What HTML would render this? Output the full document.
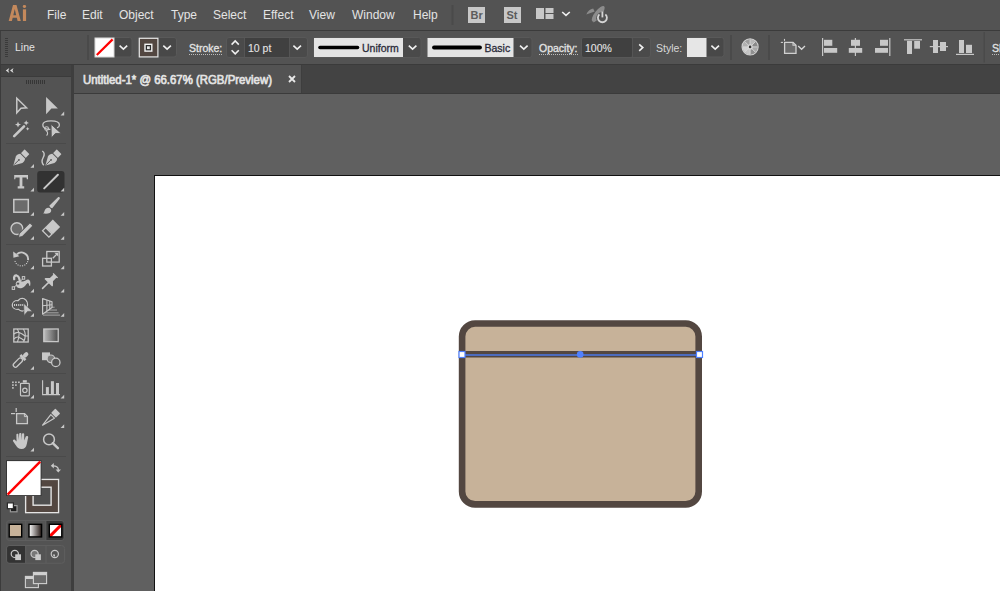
<!DOCTYPE html>
<html><head><meta charset="utf-8">
<style>
*{margin:0;padding:0;box-sizing:border-box}
html,body{width:1000px;height:591px;overflow:hidden;background:#535353;font-family:"Liberation Sans",sans-serif;position:relative}
.a{position:absolute}
.t{position:absolute;white-space:nowrap;color:#e4e4e4;font-size:12px;line-height:14px}
.mi{font-size:12px}
.cl{font-size:10.5px;line-height:12px;-webkit-text-stroke:0.3px currentColor}
.dot{border-bottom:1px dotted #bbb}
#menubar{left:0;top:0;width:1000px;height:30px;background:#535353}
#menuline{left:0;top:30px;width:1000px;height:1px;background:#3b3b3b}
#ctrl{left:0;top:31px;width:1000px;height:33px;background:#535353;border-left:1px solid #3e3e3e}
#ctrlline{left:0;top:64px;width:1000px;height:1px;background:#3b3b3b}
#tools{left:1px;top:65px;width:70px;height:526px;background:#535353}
#toolshead{left:1px;top:65px;width:70px;height:11px;background:#434343}
#toolsheadline{left:1px;top:76px;width:70px;height:1px;background:#3b3b3b}
#leftedge{left:0;top:65px;width:1px;height:526px;background:#3b3b3b}
#gap{left:71px;top:65px;width:3px;height:526px;background:#3e3e3e}
#tabstrip{left:74px;top:65px;width:926px;height:28px;background:#434343}
#tab{left:74px;top:65px;width:228px;height:28px;background:#535353;border-right:1px solid #3e3e3e}
#tabline{left:74px;top:93px;width:926px;height:1px;background:#3b3b3b}
#canvas{left:74px;top:94px;width:926px;height:497px;background:#606060}
#artboard{left:154px;top:175px;width:900px;height:500px;background:#fff;border-left:1px solid #111;border-top:1px solid #111}
</style></head>
<body>
<div class="a" id="menubar"></div>
<div class="a" id="menuline"></div>
<div class="a" id="ctrl"></div>
<div class="a" id="ctrlline"></div>
<div class="a" id="leftedge"></div>
<div class="a" id="tools"></div>
<div class="a" id="toolshead"></div>
<div class="a" id="toolsheadline"></div>
<div class="a" id="gap"></div>
<div class="a" id="tabstrip"></div>
<div class="a" id="tab"></div>
<div class="a" id="tabline"></div>
<div class="a" id="canvas"></div>
<div class="a" id="artboard"></div>


<!-- menu -->
<div class="t mi" style="left:47px;top:8px">File</div>
<div class="t mi" style="left:82px;top:8px">Edit</div>
<div class="t mi" style="left:119px;top:8px">Object</div>
<div class="t mi" style="left:171px;top:8px">Type</div>
<div class="t mi" style="left:213px;top:8px">Select</div>
<div class="t mi" style="left:263px;top:8px">Effect</div>
<div class="t mi" style="left:309px;top:8px">View</div>
<div class="t mi" style="left:352px;top:8px">Window</div>
<div class="t mi" style="left:413px;top:8px">Help</div>


<!-- control bar -->
<svg class="a" style="left:0;top:0" width="1000" height="66" viewBox="0 0 1000 66">
  <!-- gripper -->
  <g fill="#3a3a3a">
    <rect x="5" y="38" width="3" height="1"/><rect x="5" y="40" width="3" height="1"/><rect x="5" y="42" width="3" height="1"/>
    <rect x="5" y="44" width="3" height="1"/><rect x="5" y="46" width="3" height="1"/><rect x="5" y="48" width="3" height="1"/>
    <rect x="5" y="50" width="3" height="1"/><rect x="5" y="52" width="3" height="1"/><rect x="5" y="54" width="3" height="1"/>
    <rect x="5" y="56" width="3" height="1"/>
  </g>
  <!-- separators -->
  <g fill="#4a4a4a">
    <rect x="87" y="35" width="2" height="25"/>
    <rect x="730" y="35" width="2" height="25"/>
    <rect x="768" y="35" width="2" height="25"/>
    <rect x="983.5" y="32" width="1.5" height="30.5"/>
  </g>
  <!-- fill swatch -->
  <rect x="94.5" y="37.5" width="37.5" height="19.5" rx="2.5" fill="#484848" stroke="#595959" stroke-width="1"/>
  <rect x="95" y="38" width="19" height="19" fill="#fff" stroke="#d8d8d8" stroke-width="1"/>
  <line x1="96.8" y1="55" x2="112.6" y2="39.4" stroke="#f00" stroke-width="2.2"/>
  <polyline points="119.6,45.6 123.4,49.2 127.2,45.6" fill="none" stroke="#f0f0f0" stroke-width="1.6"/>
  <!-- stroke swatch -->
  <rect x="138.5" y="37.5" width="38" height="19.5" rx="2.5" fill="#484848" stroke="#595959" stroke-width="1"/>
  <rect x="139.3" y="38.3" width="18.6" height="18.6" fill="#534741" stroke="#e6e6e6" stroke-width="1.2"/>
  <rect x="145" y="44.3" width="6.8" height="6.8" fill="#2e2e2e" stroke="#f4f4f4" stroke-width="1.4"/>
  <rect x="147" y="46.3" width="2.8" height="2.8" fill="#e8e8e8"/>
  <polyline points="163.3,45.6 167.1,49.2 170.9,45.6" fill="none" stroke="#f0f0f0" stroke-width="1.6"/>
  <!-- stroke stepper -->
  <rect x="226.5" y="37.5" width="81" height="20" rx="2.5" fill="#4a4a4a" stroke="#585858" stroke-width="1"/>
  <rect x="244.5" y="38" width="44.5" height="19" fill="#404040"/>
  <rect x="244" y="38" width="1" height="19" fill="#555"/>
  <rect x="289" y="38" width="1" height="19" fill="#555"/>
  <polyline points="231.6,44.6 235.2,41 238.8,44.6" fill="none" stroke="#f0f0f0" stroke-width="1.6"/>
  <polyline points="231.6,50.2 235.2,53.8 238.8,50.2" fill="none" stroke="#f0f0f0" stroke-width="1.6"/>
  <polyline points="293.4,45.6 297.2,49.2 301,45.6" fill="none" stroke="#f0f0f0" stroke-width="1.6"/>
  <!-- uniform -->
  <rect x="313.5" y="37.5" width="107.5" height="20" rx="2.5" fill="#4a4a4a" stroke="#585858" stroke-width="1"/>
  <rect x="314" y="38" width="89" height="19" fill="#e4e4e4"/>
  <line x1="320" y1="47.5" x2="357.5" y2="47.5" stroke="#000" stroke-width="3.6" stroke-linecap="round"/>
  <polyline points="408.8,45.6 412.6,49.2 416.4,45.6" fill="none" stroke="#f0f0f0" stroke-width="1.6"/>
  <!-- basic -->
  <rect x="427" y="37.5" width="105" height="20" rx="2.5" fill="#4a4a4a" stroke="#585858" stroke-width="1"/>
  <rect x="427.5" y="38" width="86" height="19" fill="#e4e4e4"/>
  <line x1="434" y1="47.5" x2="480" y2="47.5" stroke="#000" stroke-width="3.8" stroke-linecap="round"/>
  <polyline points="520,45.6 523.8,49.2 527.6,45.6" fill="none" stroke="#f0f0f0" stroke-width="1.6"/>
  <!-- opacity -->
  <rect x="581.5" y="37.5" width="69" height="20" rx="2.5" fill="#4a4a4a" stroke="#585858" stroke-width="1"/>
  <rect x="582" y="38" width="50" height="19" rx="2" fill="#404040"/>
  <rect x="632" y="38" width="1" height="19" fill="#555"/>
  <polyline points="639.2,44.4 642.8,47.6 639.2,50.8" fill="none" stroke="#f0f0f0" stroke-width="1.6"/>
  <!-- style -->
  <rect x="686.5" y="37.5" width="37.5" height="19.5" rx="2.5" fill="#484848" stroke="#595959" stroke-width="1"/>
  <rect x="687" y="38" width="19.5" height="19" fill="#e6e6e6"/>
  <polyline points="711.4,45.6 715.2,49.2 719,45.6" fill="none" stroke="#f0f0f0" stroke-width="1.6"/>
</svg>
<div class="t cl" style="left:15px;top:41px;-webkit-text-stroke:0">Line</div>
<div class="t cl dot" style="left:189px;top:42px">Stroke:</div>
<div class="t cl" style="left:248px;top:42px;-webkit-text-stroke:0.1px">10 pt</div>
<div class="t cl" style="left:362px;top:42px;color:#2b2b3a">Uniform</div>
<div class="t cl" style="left:484.5px;top:42px;color:#2b2b3a">Basic</div>
<div class="t cl dot" style="left:539px;top:42px">Opacity:</div>
<div class="t cl" style="left:585px;top:42px;-webkit-text-stroke:0.1px">100%</div>
<div class="t cl" style="left:656px;top:42px;-webkit-text-stroke:0;color:#d8d8d8">Style:</div>
<div class="t cl dot" style="left:992px;top:42px">Sh</div>



<!-- menu & control icons -->
<svg class="a" style="left:0;top:0" width="1000" height="66" viewBox="0 0 1000 66">
  <!-- Ai logo -->
  <path d="M8.7,21 L13,5 L16.5,5 L20.8,21 L17.6,21 L16.8,17.8 L12.7,17.8 L11.9,21 Z M13.3,15.2 L16.2,15.2 L14.75,8.9 Z" fill="#c4895c" fill-rule="evenodd"/>
  <rect x="22.8" y="5" width="3.3" height="3" rx="1.4" fill="#c4895c"/>
  <rect x="22.9" y="9.3" width="3.2" height="11.7" fill="#c4895c"/>
  <!-- menu separator -->
  <rect x="451.5" y="5" width="2" height="20" fill="#4a4a4a"/>
  <!-- Br St -->
  <rect x="468" y="7" width="17" height="16" fill="#c8c8c8"/>
  <rect x="504" y="7" width="17" height="16" fill="#c8c8c8"/>
  <!-- layout -->
  <rect x="536" y="8" width="8" height="11" fill="#c8c8c8"/>
  <rect x="545.5" y="8" width="8" height="5" fill="#c8c8c8"/>
  <rect x="545.5" y="14" width="8" height="5" fill="#c8c8c8"/>
  <polyline points="562.2,12 566,15.4 569.8,12" fill="none" stroke="#eee" stroke-width="1.6"/>
  <!-- rocket -->
  <ellipse cx="598.2" cy="13.8" rx="3.4" ry="9.6" transform="rotate(38 598.2 13.8)" fill="#8c8c8c"/>
  <path d="M586.3,14.6 C587.5,11.5 590,9.2 593.2,8.6 L594.6,11.6 Z" fill="#8c8c8c"/>
  <path d="M593.2,22.6 C593.4,20.4 594.6,18.6 596.4,17.4 L598.6,19.4 Z" fill="#8c8c8c"/>
  <circle cx="602.4" cy="18.2" r="6.2" fill="#535353"/>
  <path d="M599.4,14.4 A4.5,4.5 0 1 0 605.4,14.4" fill="none" stroke="#d4d4d4" stroke-width="1.8"/>
  <line x1="602.4" y1="11.6" x2="602.4" y2="17.4" stroke="#d4d4d4" stroke-width="1.8"/>
  <!-- recolor wheel -->
  <g transform="translate(750.1,46.9)">
    <circle r="8" fill="#9a9a9a" stroke="#cfcfcf" stroke-width="1.2"/>
    <path d="M0,0 L0,-7.5 A7.5,7.5 0 0 1 5.3,-5.3 Z" fill="#b8b8b8"/>
    <path d="M0,0 L5.3,-5.3 A7.5,7.5 0 0 1 7.5,0 Z" fill="#8a8a8a"/>
    <path d="M0,0 L7.5,0 A7.5,7.5 0 0 1 5.3,5.3 Z" fill="#a8a8a8"/>
    <path d="M0,0 L5.3,5.3 A7.5,7.5 0 0 1 0,7.5 Z" fill="#909090"/>
    <path d="M0,0 L0,7.5 A7.5,7.5 0 0 1 -5.3,5.3 Z" fill="#c4c4c4"/>
    <path d="M0,0 L-5.3,5.3 A7.5,7.5 0 0 1 -7.5,0 Z" fill="#d0d0d0"/>
    <path d="M0,0 L-7.5,0 A7.5,7.5 0 0 1 -5.3,-5.3 Z" fill="#b0b0b0"/>
    <path d="M0,0 L-5.3,-5.3 A7.5,7.5 0 0 1 0,-7.5 Z" fill="#9c9c9c"/>
    <g stroke="#d8d8d8" stroke-width="0.9">
      <line x1="0" y1="-7.5" x2="0" y2="7.5"/><line x1="-7.5" y1="0" x2="7.5" y2="0"/>
      <line x1="-5.3" y1="-5.3" x2="5.3" y2="5.3"/><line x1="-5.3" y1="5.3" x2="5.3" y2="-5.3"/>
    </g>
    <circle r="2.6" fill="#d8d8d8"/>
    <circle r="1.3" fill="#333"/>
  </g>
  <!-- doc icon -->
  <path d="M784.6,42.3 L793,42.3 L796,45.3 L796,53.4 L784.6,53.4 Z" fill="#6b6b6b" stroke="#d0d0d0" stroke-width="1.3"/>
  <path d="M793,42.3 L793,45.3 L796,45.3" fill="none" stroke="#d0d0d0" stroke-width="1.1"/>
  <line x1="780.8" y1="42.4" x2="783" y2="42.4" stroke="#d0d0d0" stroke-width="1.1"/>
  <line x1="784.5" y1="38.9" x2="784.5" y2="40.9" stroke="#d0d0d0" stroke-width="1.1"/>
  <polyline points="798.2,46 801.6,49.3 805,46" fill="none" stroke="#d8d8d8" stroke-width="1.3"/>
  <!-- align -->
  <g fill="#c8c8c8">
    <rect x="822" y="38" width="1.2" height="18"/>
    <rect x="824" y="39.8" width="8.3" height="6"/>
    <rect x="824" y="48" width="13.2" height="4.8"/>
    <rect x="854.8" y="38" width="1.2" height="18"/>
    <rect x="851" y="39.8" width="9" height="6"/>
    <rect x="848.8" y="48" width="13.4" height="4.8"/>
    <rect x="889.2" y="38" width="1.2" height="18"/>
    <rect x="880" y="39.8" width="8" height="6"/>
    <rect x="875" y="48" width="13" height="4.8"/>
    <rect x="904" y="39.2" width="18" height="1.2"/>
    <rect x="907" y="40.8" width="5" height="13.2"/>
    <rect x="914.2" y="41" width="5.8" height="7.7"/>
    <rect x="929.8" y="46" width="18.2" height="1.2"/>
    <rect x="933" y="40" width="5" height="13"/>
    <rect x="940" y="42" width="6" height="9"/>
    <rect x="956" y="53.8" width="18" height="1.2"/>
    <rect x="959" y="40" width="5" height="13"/>
    <rect x="966" y="44.8" width="6" height="8.2"/>
  </g>
</svg>
<div class="t" style="left:470.5px;top:8px;font-size:11px;font-weight:bold;color:#5c5c5c">Br</div>
<div class="t" style="left:506.5px;top:8px;font-size:11px;font-weight:bold;color:#5c5c5c">St</div>


<!-- tab -->
<div class="t" id="m_tab" style="left:83px;top:73px;font-size:12px;color:#e4e4e4;-webkit-text-stroke:0.65px #e4e4e4;transform:scaleX(.95);transform-origin:0 0">Untitled-1* @ 66.67% (RGB/Preview)</div>
<svg class="a" style="left:0;top:60px" width="320" height="40" viewBox="0 60 320 40">
  <path d="M289,76 L295,82 M295,76 L289,82" stroke="#e8e8e8" stroke-width="1.8"/>
</svg>

<!-- tools panel -->
<svg class="a" style="left:0;top:60px" width="74" height="531" viewBox="0 60 74 531">
  <!-- header << -->
  <path d="M9.3,68.1 L5.8,70.5 L9.3,72.9 L8.3,70.5 Z M13.5,68.1 L10,70.5 L13.5,72.9 L12.5,70.5 Z" fill="#dcdcdc"/>
  <!-- gripper -->
  <g fill="#363636">
    <rect x="26" y="80" width="1" height="4"/><rect x="28" y="80" width="1" height="4"/><rect x="30" y="80" width="1" height="4"/>
    <rect x="32" y="80" width="1" height="4"/><rect x="34" y="80" width="1" height="4"/><rect x="36" y="80" width="1" height="4"/>
    <rect x="38" y="80" width="1" height="4"/><rect x="40" y="80" width="1" height="4"/><rect x="42" y="80" width="1" height="4"/>
    <rect x="44" y="80" width="1" height="4"/>
  </g>
  <!-- separators -->
  <g fill="#4a4a4a">
    <rect x="6" y="143" width="60" height="1"/>
    <rect x="6" y="244" width="60" height="1"/>
    <rect x="6" y="321" width="60" height="1"/>
    <rect x="6" y="373" width="60" height="1"/>
    <rect x="6" y="402" width="60" height="1"/>
    <rect x="6" y="456" width="60" height="1"/>
  </g>
  <!-- selected line tool bg -->
  <rect x="37.2" y="171" width="27.3" height="21.4" rx="3" fill="#323232"/>
  <!-- flyout triangles -->
  <g fill="#c8c8c8">
    <path d="M60.6,115.4 L64.2,115.4 L64.2,111.4 Z"/>
    <path d="M30.4,167.8 L34,167.8 L34,164 Z"/>
    <path d="M30.4,191.6 L34,191.6 L34,187.8 Z"/>
    <path d="M60.6,191.6 L64.2,191.6 L64.2,187.8 Z"/>
    <path d="M30.4,215.8 L34,215.8 L34,212 Z"/>
    <path d="M60.6,215.8 L64.2,215.8 L64.2,212 Z"/>
    <path d="M30.4,239.8 L34,239.8 L34,236 Z"/>
    <path d="M60.6,239.8 L64.2,239.8 L64.2,236 Z"/>
    <path d="M30.4,269.2 L34,269.2 L34,265.4 Z"/>
    <path d="M60.6,269.2 L64.2,269.2 L64.2,265.4 Z"/>
    <path d="M30.4,292.6 L34,292.6 L34,288.8 Z"/>
    <path d="M60.6,292.6 L64.2,292.6 L64.2,288.8 Z"/>
    <path d="M30.4,316.8 L34,316.8 L34,313 Z"/>
    <path d="M60.6,316.8 L64.2,316.8 L64.2,313 Z"/>
    <path d="M30.4,369.8 L34,369.8 L34,366 Z"/>
    <path d="M30.4,398.6 L34,398.6 L34,394.8 Z"/>
    <path d="M60.6,398.6 L64.2,398.6 L64.2,394.8 Z"/>
    <path d="M60.6,428 L64.2,428 L64.2,424.2 Z"/>
    <path d="M30.4,451.6 L34,451.6 L34,447.8 Z"/>
  </g>
  <g fill="#c8c8c8" stroke="#c8c8c8">
  <!-- row1 selection (outline) -->
  <path d="M16.8,98.2 L26.6,107.8 L21,108.2 L16.8,112.8 Z" fill="none" stroke-width="1.5" stroke-linejoin="miter"/>
  <!-- direct selection (filled) -->
  <path d="M46.1,96.9 L57.9,108.5 L51.4,108.5 L46.1,114.2 Z" stroke="none"/>
  <!-- row2 magic wand -->
  <line x1="14.2" y1="136.2" x2="24" y2="126.4" stroke-width="2.6" stroke-linecap="round"/>
  <path d="M18,121.6 L18.9,123.7 L21,124.6 L18.9,125.5 L18,127.6 L17.1,125.5 L15,124.6 L17.1,123.7 Z" stroke="none"/>
  <path d="M26.2,120.2 L27,122.1 L28.9,122.9 L27,123.7 L26.2,125.6 L25.4,123.7 L23.5,122.9 L25.4,122.1 Z" stroke="none"/>
  <path d="M27.6,127 L28.2,128.2 L29.4,128.8 L28.2,129.4 L27.6,130.6 L27,129.4 L25.8,128.8 L27,128.2 Z" stroke="none"/>
  <!-- lasso -->
  <path d="M50.5,129.4 C45.5,129.6 42.6,127.6 42.8,124.8 C43,122 47,120.9 51,120.9 C55.5,120.9 59.4,122.2 59.4,124.9 C59.4,126.3 58.6,127.3 57,127.9" fill="none" stroke-width="1.3"/>
  <circle cx="46.6" cy="128.6" r="1.9" fill="none" stroke-width="1.1"/>
  <path d="M46.2,130.6 C47.8,132 48.2,133.8 46.6,135.6" fill="none" stroke-width="1.1"/>
  <path d="M51,124.2 L61.2,133.4 L55.4,133.5 L51.3,138 Z" stroke="#535353" stroke-width="0.9"/>
  <!-- row3 pen -->
  <g transform="translate(13.3,165.5) rotate(45)">
    <path d="M0,0 L-4.6,-8.2 C-5.2,-10 -4.6,-12 -3.4,-13.2 L3.4,-13.2 C4.6,-12 5.2,-10 4.6,-8.2 Z" stroke="none"/>
    <rect x="-3.4" y="-19.4" width="6.8" height="5.2" rx="0.6" stroke="none"/>
    <line x1="0" y1="-1.2" x2="0" y2="-7.5" stroke="#535353" stroke-width="0.9"/><circle cx="0" cy="-8" r="0.9" fill="#535353" stroke="none"/>
  </g>
  <!-- curvature pen -->
  <g transform="translate(45.4,165.5) rotate(45)">
    <path d="M0,0 L-4.6,-8.2 C-5.2,-10 -4.6,-12 -3.4,-13.2 L3.4,-13.2 C4.6,-12 5.2,-10 4.6,-8.2 Z" stroke="none"/>
    <rect x="-3.4" y="-19.4" width="6.8" height="5.2" rx="0.6" stroke="none"/>
    <line x1="0" y1="-1.2" x2="0" y2="-7.5" stroke="#535353" stroke-width="0.9"/><circle cx="0" cy="-8" r="0.9" fill="#535353" stroke="none"/>
  </g>
  <path d="M42.3,151 C44.6,152.6 44.6,155 43.2,157.5 C41.8,160 41.6,163 43.8,165.2" fill="none" stroke-width="1.4"/>
  <!-- row4 type T -->
  <path d="M14.2,179.2 L14.2,175 L28,175 L28,179.2 L26.8,179.2 L26.6,177.5 L22.4,177.5 L22.4,186.2 L24.2,186.2 L24.2,188.6 L17.7,188.6 L17.7,186.2 L19.6,186.2 L19.6,177.5 L15.5,177.5 L15.3,179.2 Z" stroke="none"/>
  <!-- line -->
  <line x1="44.2" y1="188.4" x2="57.9" y2="174.7" stroke-width="2" stroke-linecap="round"/>
  <!-- row5 rectangle -->
  <rect x="13.8" y="199.5" width="14.5" height="12.7" fill="#6b6b6b" stroke-width="1.5"/>
  <!-- paintbrush -->
  <path d="M-2,6.2 L-1.2,-5.6 C-1.1,-7.4 1.1,-7.4 1.2,-5.6 L2,6.2 C1,6.8 -1,6.8 -2,6.2 Z" transform="translate(54.9,202.4) rotate(42)" stroke="none"/>
  <path d="M43.2,213.6 C44.6,212.4 44.2,210.2 45.8,208.8 C47.3,207.5 49.6,207.6 50.7,208.9 C51.7,210.2 51.2,212.2 49.6,213 C47.8,213.9 45.5,213.6 43.2,213.6 Z" stroke="none"/>
  <!-- row6 shaper -->
  <circle cx="16.9" cy="228.6" r="5.9" fill="#6b6b6b" stroke-width="1.4"/>
  <g transform="translate(18.4,237.4) rotate(45)">
    <path d="M0,0 L-2.2,-3.4 L-2.2,-18 C-2.2,-19 2.2,-19 2.2,-18 L2.2,-3.4 Z" stroke="#535353" stroke-width="1"/>
  </g>
  <!-- eraser -->
  <g transform="translate(51.1,228.6) rotate(-45)">
    <rect x="-2.8" y="-5.2" width="10.4" height="10.4" stroke="none"/>
    <rect x="-7.6" y="-4.5" width="4.4" height="9" fill="none" stroke-width="1.3"/>
  </g>
  <!-- row7 rotate -->
  <path d="M16.92,254.22 A6.7,6.7 0 0 1 28.03,260.13" fill="none" stroke-width="1.9"/>
  <path d="M13.2,251.4 L13.4,257.8 L19.4,256.2 Z" stroke="none"/>
  <g stroke="none"><rect x="14.55" y="260.94" width="1.1" height="1.1"/><rect x="15.72" y="262.96" width="1.1" height="1.1"/><rect x="17.50" y="264.45" width="1.1" height="1.1"/><rect x="19.69" y="265.25" width="1.1" height="1.1"/><rect x="22.01" y="265.25" width="1.1" height="1.1"/><rect x="24.20" y="264.45" width="1.1" height="1.1"/><rect x="25.98" y="262.96" width="1.1" height="1.1"/><rect x="27.06" y="261.16" width="1.1" height="1.1"/></g>
  <!-- scale -->
  <rect x="46.8" y="251.5" width="12.4" height="10.6" fill="none" stroke-width="1.3"/>
  <rect x="42.6" y="258.3" width="8.8" height="7.7" fill="none" stroke-width="1.3"/>
  <line x1="52.8" y1="258.2" x2="57.4" y2="253.6" stroke-width="1.3"/>
  <path d="M54.4,252.8 L58.2,252.8 L58.2,256.6 Z" stroke="none"/>
  <!-- row8 puppet warp -->
  <path d="M14.2,279.2 C13.6,276.6 15,275.2 16.6,275.5 C18.4,275.9 19.4,278.2 19.8,281" fill="none" stroke-width="2.3" stroke-linecap="round"/>
  <path d="M17,281.2 C19,280.4 21,281.8 23,281.6 C25,281.3 26.6,279.3 28.3,279.6 C30.2,280 30.8,282.6 30.2,285.8 L29.2,285.8 C29,284 28.4,282.8 27.4,283.2 C25.8,284.2 25,287 22,287.9 C19.5,288.5 17.4,288 16.3,286.2 C15.5,284.8 15.8,282.2 17,281.2 Z" stroke="none"/>
  <line x1="13.6" y1="287.6" x2="16.6" y2="285" stroke-width="1"/>
  <line x1="19.6" y1="282" x2="23" y2="278.6" stroke-width="1"/>
  <circle cx="18" cy="283.6" r="1.7" fill="#535353" stroke-width="1"/>
  <rect x="12.2" y="286.8" width="2.4" height="2.6" fill="#535353" stroke-width="1"/>
  <rect x="22.3" y="276.6" width="2.4" height="2.6" fill="#535353" stroke-width="1"/>
  <!-- pin -->
  <g transform="translate(50,281) rotate(45)">
    <path d="M-3.2,-8.2 L3.2,-8.2 L3.2,-7 L2.2,-6.8 L2.2,-2 L5.4,1.2 L5.4,2.4 L-5.4,2.4 L-5.4,1.2 L-2.2,-2 L-2.2,-6.8 L-3.2,-7 Z" stroke="none"/>
    <line x1="0" y1="2.4" x2="0" y2="10.5" stroke-width="1.6" stroke-linecap="round"/>
  </g>
  <!-- row9 shape builder -->
  <ellipse cx="17.3" cy="305" rx="5" ry="4.4" fill="none" stroke-width="1.3"/>
  <ellipse cx="22.2" cy="304.7" rx="5.3" ry="6.3" fill="none" stroke-width="1.3"/>
  <ellipse cx="17.3" cy="305" rx="4.35" ry="3.75" fill="#535353" stroke="none"/>
  <ellipse cx="22.2" cy="304.7" rx="4.65" ry="5.65" fill="#535353" stroke="none"/>
  <g stroke="none"><rect x="14" y="304" width="1.1" height="2"/><rect x="16" y="304" width="1.1" height="2"/><rect x="18.2" y="304" width="1.1" height="2"/><rect x="20.2" y="304" width="1.1" height="2"/><rect x="22.2" y="304" width="1.1" height="2"/></g>
  <path d="M23.6,303.2 L32.4,311.4 L27.6,311.4 L24.1,315.4 Z" stroke="#535353" stroke-width="0.6"/>
  <!-- perspective grid -->
  <g stroke="none" fill="#8c8c8c">
    <rect x="50" y="306.6" width="4.6" height="1.4"/><rect x="47.5" y="309.3" width="9.5" height="1.5"/>
    <rect x="45" y="312" width="13.6" height="1.5"/><rect x="43" y="314.4" width="17" height="1.5"/>
  </g>
  <path d="M42.6,298.6 L52,301.8 L52,307.6 L42.6,314.2 Z" fill="#535353" stroke-width="1.2" stroke-linejoin="round"/>
  <line x1="46.9" y1="300" x2="46.9" y2="311.2" stroke-width="1.1"/>
  <line x1="49.8" y1="301" x2="49.8" y2="309.2" stroke-width="1.1"/>
  <line x1="42.6" y1="305.8" x2="52" y2="304.8" stroke-width="1.1"/>
  <!-- row10 mesh -->
  <rect x="13.8" y="329" width="14.4" height="13" fill="none" stroke-width="1.3"/>
  <path d="M17.2,329 C19.8,332 19.8,336 17.4,342 M23.4,329 C26,333 26,337 23.6,342 M13.8,334 C15.5,332.6 17.5,332 19.2,332.6 M13.8,339 C15.5,337.4 17.3,336.8 18.8,337.2 M19.2,332.6 C21.5,333.5 23.5,334.8 25.3,336.2 M18.8,337.2 C21,338 23,339.5 24.6,341 M25.4,336 L28.2,336" fill="none" stroke-width="1.1"/>
  <!-- gradient -->
  <defs><linearGradient id="gr1" x1="0" x2="1" y1="0" y2="0"><stop offset="0" stop-color="#bdbdbd"/><stop offset="1" stop-color="#4a4a4a"/></linearGradient></defs>
  <rect x="43.8" y="329" width="14.4" height="12.6" fill="url(#gr1)" stroke="#c8c8c8" stroke-width="1.3"/>
  <!-- row11 eyedropper -->
  <g transform="translate(20.3,360.2) rotate(45)">
    <rect x="-2.2" y="-2.2" width="4.4" height="11.2" rx="2.2" fill="none" stroke-width="1.3"/>
    <rect x="-3.6" y="-5" width="7.2" height="2.6" stroke="none"/>
    <rect x="-2" y="-10.6" width="4" height="6" rx="2" stroke="none"/>
  </g>
  <!-- blend -->
  <rect x="42" y="352.4" width="8" height="7.8" stroke="none"/>
  <circle cx="50.9" cy="358.8" r="3.8" fill="#7a7a7a" stroke-width="1.2"/>
  <circle cx="55.8" cy="362.4" r="4.2" fill="#535353" stroke-width="1.3"/>
  <!-- row12 symbol sprayer -->
  <g stroke="none">
    <rect x="12.1" y="381.5" width="1.6" height="1.6"/><rect x="15.1" y="381.5" width="1.6" height="1.6"/><rect x="18.1" y="381.5" width="1.6" height="1.6"/>
    <rect x="12.1" y="384.3" width="1.6" height="1.6"/><rect x="15.1" y="384.3" width="1.6" height="1.6"/>
    <rect x="12.1" y="387.1" width="1.6" height="1.6"/>
    <rect x="22.8" y="380.2" width="4" height="2.4"/>
  </g>
  <rect x="20.5" y="383.4" width="8.8" height="12.4" rx="0.8" fill="none" stroke-width="1.2"/>
  <circle cx="24.9" cy="390.3" r="2.2" fill="none" stroke-width="1.2"/>
  <!-- column graph -->
  <path d="M42.6,380.2 L42.6,394.6 L60,394.6" fill="none" stroke-width="1.1"/>
  <g stroke="none"><rect x="45.9" y="387.1" width="3" height="7"/><rect x="50.9" y="381.2" width="3" height="12.9"/><rect x="56" y="383" width="3" height="11.1"/></g>
  <!-- row13 artboard -->
  <path d="M16.6,413.6 L24.6,413.6 L27.4,416.4 L27.4,423.6 L16.6,423.6 Z" fill="#6b6b6b" stroke-width="1.3"/>
  <path d="M24.4,413.6 L24.4,416.6 L27.4,416.6" fill="none" stroke-width="1"/>
  <line x1="11" y1="413.6" x2="15.2" y2="413.6" stroke-width="1.2"/>
  <line x1="16.2" y1="408" x2="16.2" y2="412" stroke-width="1.2"/>
  <!-- slice -->
  <path d="M42.6,425.2 L50.8,414.6 L54.4,418.2 Z" fill="none" stroke-width="1.2" stroke-linejoin="round"/>
  <g transform="translate(55.2,413.6) rotate(45)"><rect x="-3.4" y="-3.6" width="6.8" height="6" rx="0.6" stroke="none"/></g>
  <!-- row14 hand -->
  <path d="M16.4,437.4 L16.4,434.6 C16.4,433.4 18.4,433.4 18.4,434.6 L18.6,440 L19.2,433.9 C19.2,432.6 21.4,432.6 21.4,433.9 L21.6,440 L22,434.2 C22,433 24.2,433 24.2,434.2 L24.2,440.6 L25.8,436.6 C26.2,435.6 28.4,436 28.2,437.2 L26.8,444 C26.2,447.4 24.4,449 21.6,449 C18.6,449 17.4,447.8 16,445.6 L13.2,441.4 C12.4,440.2 13.8,439 14.8,439.8 L16.6,441.6 Z" stroke="none"/>
  <!-- zoom -->
  <circle cx="49" cy="439.4" r="5.4" fill="none" stroke-width="1.5"/>
  <line x1="52.8" y1="443.2" x2="57.9" y2="448.2" stroke-width="2.4" stroke-linecap="round"/>
  </g>

  <!-- fill / stroke -->
  <rect x="24.8" y="478.6" width="34.6" height="34.9" fill="#2f2f2f"/>
  <rect x="25.6" y="479.4" width="33" height="33.3" fill="#534741" stroke="#e4e4e4" stroke-width="1.4"/>
  <rect x="33.1" y="487.2" width="18" height="18" fill="#4f4f4f" stroke="#e4e4e4" stroke-width="1.4"/>
  <rect x="6.1" y="460.2" width="35.4" height="35.8" fill="#333"/>
  <rect x="7" y="461.1" width="33.6" height="34" fill="#fff"/>
  <line x1="7.6" y1="494.6" x2="40.2" y2="461.6" stroke="#f00" stroke-width="2.4"/>
  <!-- swap -->
  <path d="M52.6,465.8 C56,465.6 58.4,467 58.4,470" fill="none" stroke="#c8c8c8" stroke-width="1.3"/>
  <path d="M50.8,465.8 L53.8,463 L53.8,468.6 Z" fill="#c8c8c8"/>
  <path d="M55.6,469.6 L61,469.6 L58.3,472.5 Z" fill="#c8c8c8"/>
  <!-- default -->
  <rect x="10.4" y="505.6" width="6.6" height="6.2" fill="#1e1e1e" stroke="#9a9a9a" stroke-width="1.2"/>
  <rect x="7.4" y="502.9" width="6" height="5.8" fill="#fff" stroke="#2a2a2a" stroke-width="1.2"/>

  <!-- color mode -->
  <rect x="6.5" y="520.5" width="57.5" height="20" rx="3" fill="#545454" stroke="#5e5e5e" stroke-width="1"/>
  <path d="M46,521 L61,521 Q63.6,521 63.6,523.6 L63.6,537.6 Q63.6,540 61,540 L46,540 Z" fill="#383838"/>
  <rect x="25.2" y="521" width="1" height="19" fill="#5e5e5e"/>
  <rect x="45.4" y="521" width="1" height="19" fill="#5e5e5e"/>
  <rect x="9.2" y="524.3" width="12.5" height="12.6" fill="#c7b299" stroke="#000" stroke-width="1.4"/>
  <defs><linearGradient id="gr2" x1="0" x2="1" y1="0" y2="0"><stop offset="0" stop-color="#fff"/><stop offset="1" stop-color="#231815"/></linearGradient></defs>
  <rect x="29" y="524.3" width="12.6" height="12.6" fill="url(#gr2)" stroke="#000" stroke-width="1.4"/>
  <svg x="49.3" y="524.3" width="12.5" height="12.6" viewBox="0 0 12.5 12.6" overflow="hidden">
    <rect x="0" y="0" width="12.5" height="12.6" fill="#fff"/>
    <line x1="0" y1="12.6" x2="12.5" y2="0" stroke="#f00" stroke-width="3"/>
  </svg>
  <rect x="49.3" y="524.3" width="12.5" height="12.6" fill="none" stroke="#000" stroke-width="1.4"/>

  <!-- drawing modes -->
  <rect x="6.6" y="545.5" width="58" height="17.8" rx="3" fill="#545454" stroke="#5e5e5e" stroke-width="1"/>
  <path d="M25.2,546 L9.6,546 Q7.1,546 7.1,548.6 L7.1,560.4 Q7.1,562.8 9.6,562.8 L25.2,562.8 Z" fill="#333"/>
  <rect x="25.2" y="546" width="1" height="17" fill="#5e5e5e"/>
  <rect x="45.5" y="546" width="1" height="17" fill="#5e5e5e"/>
  <circle cx="14.8" cy="553.9" r="3.6" fill="none" stroke="#c8c8c8" stroke-width="1.2"/>
  <rect x="15.2" y="554.3" width="5.8" height="5.8" fill="#c8c8c8"/>
  <circle cx="34.6" cy="553.9" r="3.6" fill="#777" stroke="#c8c8c8" stroke-width="1.2"/>
  <rect x="35.3" y="554.3" width="5.6" height="5.8" fill="#c8c8c8"/>
  <circle cx="54.8" cy="554" r="3.6" fill="none" stroke="#c8c8c8" stroke-width="1.2"/>
  <path d="M52.8,554.4 L55,554.4 L55,556.8 C53.8,556.6 53,555.6 52.8,554.4 Z" fill="#c8c8c8"/>

  <!-- screen mode -->
  <rect x="25.4" y="576.4" width="13" height="11.2" fill="#6b6b6b" stroke="#d0d0d0" stroke-width="1.1"/>
  <rect x="25.4" y="576.4" width="13" height="2.6" fill="#d0d0d0"/>
  <rect x="33.4" y="572.4" width="13.2" height="11.2" fill="#6b6b6b" stroke="#d0d0d0" stroke-width="1.1"/>
  <rect x="33.4" y="572.4" width="13.2" height="2.8" fill="#d0d0d0"/>
</svg>

<!-- artwork -->
<svg class="a" style="left:0;top:0" width="1000" height="591" viewBox="0 0 1000 591">
  <rect x="462.1" y="323.5" width="236.6" height="180.9" rx="13" ry="13" fill="#c7b299" stroke="#534741" stroke-width="6.6"/>
  <line x1="462" y1="354.2" x2="699" y2="354.2" stroke="#534741" stroke-width="6.6"/>
  <line x1="462" y1="355" x2="699" y2="355" stroke="#4a77e8" stroke-width="1.6"/>
  <rect x="459" y="351.5" width="6" height="6" fill="#fff" stroke="#4f80ff" stroke-width="1.2"/>
  <rect x="696.5" y="351.5" width="6" height="6" fill="#fff" stroke="#4f80ff" stroke-width="1.2"/>
  <circle cx="580.2" cy="354.4" r="3.3" fill="#4f80ff"/>
</svg>

</body></html>
